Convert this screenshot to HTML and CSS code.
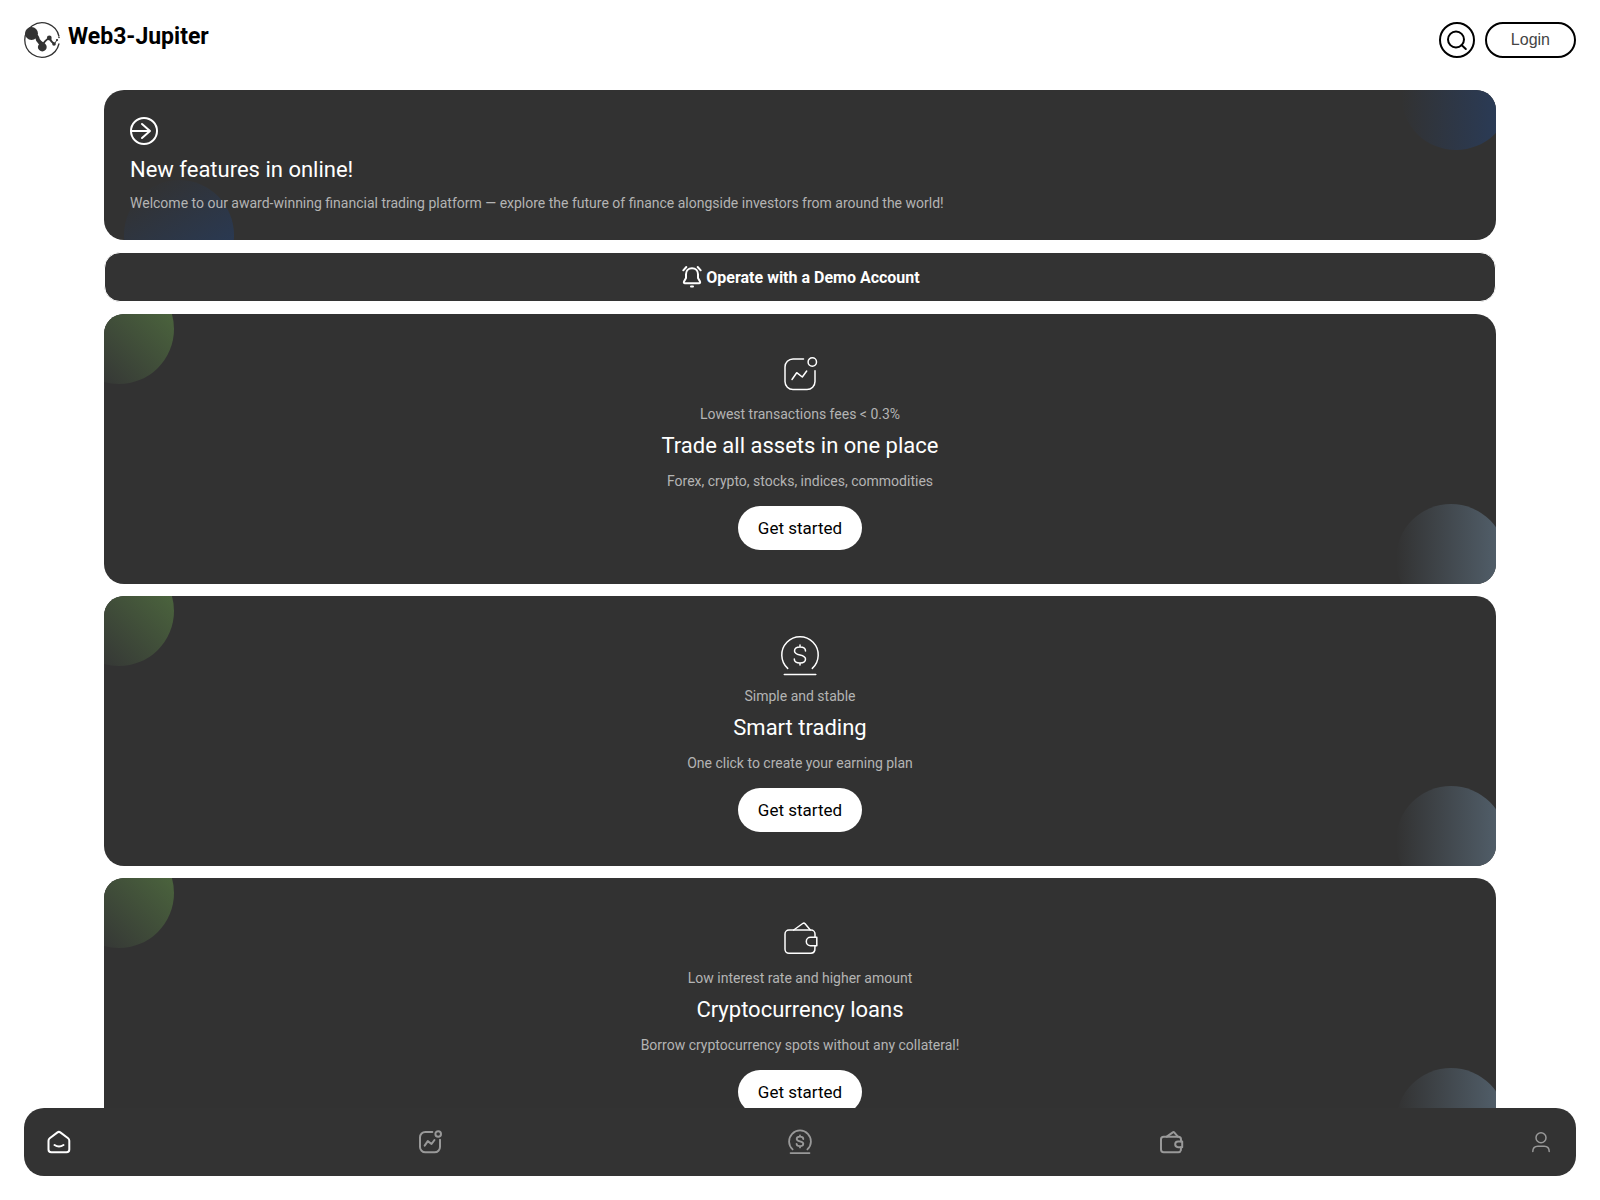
FILE: index.html
```html
<!DOCTYPE html>
<html lang="en">
<head>
<meta charset="utf-8">
<meta name="viewport" content="width=device-width, initial-scale=1">
<title>Web3-Jupiter</title>
<link rel="stylesheet" href="styles.css">
</head>
<body>
<svg class="sprite" aria-hidden="true">
  <defs>
    <g id="chart">
      <path d="M23.500 5H13a8 8 0 0 0-8 8v14.500a8 8 0 0 0 8 8h14a8 8 0 0 0 8-8V16.700"/>
      <circle cx="32.300" cy="8" r="4.200"/>
      <path d="M12 25.500l4.700-6.800 5.600 4.300 4.400-6"/>
    </g>
    <g id="dollar">
      <path d="M7.700 32.400a18.200 18.200 0 1 1 24.600 0M4.300 38.400h31.500"/>
      <path d="M20 9v2M20 27v2M25.500 15c0-2.500-2-4-5.500-4s-5.500 1.500-5.500 4c0 5.500 11 2.500 11 8 0 2.600-2.200 4-5.500 4s-5.700-1.400-5.700-4"/>
    </g>
    <g id="wallet">
      <path d="M35 19.300V16a4 4 0 0 0-4-4H9a4 4 0 0 0-4 4v15.300a4 4 0 0 0 4 4h22a4 4 0 0 0 3.800-3l.2-4.600"/>
      <path d="M36.800 19.300h-6.300a4.200 4.200 0 0 0 0 8.400h6.300zM13.700 12l9-6.500a1.800 1.800 0 0 1 2.400.3L30.300 12"/>
    </g>
  </defs>
</svg>

<header class="topbar">
  <a class="brand" href="#">
    <svg class="brand-logo" viewBox="0 0 36 36" aria-hidden="true">
      <path d="M34.900 14A17.300 17.300 0 1 0 34.900 22" stroke-width="1.300"/>
      <path d="M9 12q4.500 2 5 6 1.500 2.500 4 4" stroke-width="4"/>
      <path d="M18.300 24q1.700-5 7-8M25.300 16q2 4 5 6" stroke-width="2"/>
      <path d="M30.300 22l2.700-4" stroke-width="1"/>
      <g class="brand-dots">
        <circle cx="7.500" cy="11.500" r="6.500"/>
        <circle cx="18.300" cy="25" r="4.400"/>
        <circle cx="25.300" cy="16" r="2.400"/>
        <circle cx="30" cy="22" r="1.800"/>
        <circle cx="33" cy="18" r="1.100"/>
        <circle cx="35" cy="15.500" r=".8"/>
      </g>
    </svg>
    <span class="brand-name">Web3-Jupiter</span>
  </a>
  <div class="topbar-actions">
    <button class="search-button" type="button" aria-label="Search">
      <svg class="icon-search" viewBox="0 0 24 24" aria-hidden="true"><circle cx="11" cy="11.500" r="8"/><path d="M16.500 17l4.300 4"/></svg>
    </button>
    <button class="login-button" type="button">Login</button>
  </div>
</header>

<main class="content">
  <section class="card news">
    <svg class="icon-arrow" viewBox="0 0 28 28" aria-hidden="true"><circle cx="14" cy="14" r="13"/><path d="M1 14h19M12 7l8 7-8 7"/></svg>
    <h2 class="title">New features in online!</h2>
    <p class="text">Welcome to our award-winning financial trading platform — explore the future of finance alongside investors from around the world!</p>
  </section>

  <button class="demo-button" type="button">
    <svg class="icon-bell" viewBox="0 0 24 24" aria-hidden="true"><path d="M12 3.300c-3.700 0-6 2.700-6 6V13l-2 3.600c-.4.800 0 1.600.9 1.600h14.200c.9 0 1.300-.8.900-1.600L18 13V9.300c0-3.300-2.300-6-6-6zM11 21.500h2M3.300 5.300L6.300 2M20.700 5.300L17.700 2"/></svg>
    <span>Operate with a Demo Account</span>
  </button>

  <section class="card feature">
    <svg class="feature-icon" viewBox="0 0 40 40" aria-hidden="true"><use href="#chart"/></svg>
    <p class="text">Lowest transactions fees &lt; 0.3%</p>
    <h2 class="title">Trade all assets in one place</h2>
    <p class="text">Forex, crypto, stocks, indices, commodities</p>
    <button class="start-button" type="button">Get started</button>
  </section>

  <section class="card feature">
    <svg class="feature-icon" viewBox="0 0 40 40" aria-hidden="true"><use href="#dollar"/></svg>
    <p class="text">Simple and stable</p>
    <h2 class="title">Smart trading</h2>
    <p class="text">One click to create your earning plan</p>
    <button class="start-button" type="button">Get started</button>
  </section>

  <section class="card feature">
    <svg class="feature-icon" viewBox="0 0 40 40" aria-hidden="true"><use href="#wallet"/></svg>
    <p class="text">Low interest rate and higher amount</p>
    <h2 class="title">Cryptocurrency loans</h2>
    <p class="text">Borrow cryptocurrency spots without any collateral!</p>
    <button class="start-button" type="button">Get started</button>
  </section>
</main>

<nav class="tabbar" aria-label="Main">
  <a class="tab tab-active" href="#" aria-label="Home"><svg viewBox="0 0 24 24"><path d="M10.500 2.400L2.700 8.300A3 3 0 0 0 1.500 10.700v8.800a2.800 2.800 0 0 0 2.800 2.800h15.200a2.800 2.800 0 0 0 2.800-2.800v-8.800a3 3 0 0 0-1.200-2.400l-7.800-5.900a2.300 2.300 0 0 0-2.800 0zM7.500 15q4.500 3 9 0"/></svg></a>
  <a class="tab" href="#" aria-label="Trade"><svg class="tab-wide" viewBox="2 2 36 36"><use href="#chart"/></svg></a>
  <a class="tab" href="#" aria-label="Smart trading"><svg class="tab-wide" viewBox="0 0 40 40"><use href="#dollar"/></svg></a>
  <a class="tab" href="#" aria-label="Loans"><svg class="tab-wide" viewBox="2 2 36 36"><use href="#wallet"/></svg></a>
  <a class="tab" href="#" aria-label="Profile"><svg viewBox="0 0 24 24"><circle cx="12" cy="7.800" r="5"/><path d="M3.800 21.500c0-3.500 2-5.300 5-5.300h6.400c3 0 5 1.800 5 5.300"/></svg></a>
</nav>
</body>
</html>
```
FILE: styles.css
```css
* {
  box-sizing: border-box;
}

body {
  margin: 0;
  padding-bottom: 28px;
  background: #fff;
  color: #000;
  font-family: Roboto, "Liberation Sans", sans-serif;
}

button {
  font-family: inherit;
  cursor: pointer;
}

svg {
  display: block;
  flex: none;
  overflow: visible;
  fill: none;
  stroke: currentColor;
  stroke-linecap: round;
  stroke-linejoin: round;
}

.sprite {
  display: none;
}

.topbar {
  display: flex;
  justify-content: space-between;
  align-items: flex-start;
  padding: 22px 24px 32px;
}

.brand {
  display: flex;
  gap: 8px;
  color: #000;
  text-decoration: none;
}

.brand-logo {
  width: 36px;
  height: 36px;
  color: #333;
}

.brand-dots {
  fill: #333;
  stroke: none;
}

.brand-name {
  font-size: 23px;
  line-height: 30px;
  font-weight: 700;
}

.topbar-actions {
  display: flex;
  gap: 10px;
}

.search-button {
  display: flex;
  align-items: center;
  justify-content: center;
  width: 36px;
  height: 36px;
  padding: 0;
  border: 2px solid #000;
  border-radius: 50%;
  background: #fff;
  color: #000;
}

.icon-search {
  width: 24px;
  height: 24px;
  stroke-width: 2;
}

.login-button {
  height: 36px;
  padding: 0 24px;
  border: 2px solid #000;
  border-radius: 18px;
  background: #fff;
  color: #444;
  font-family: "Liberation Sans", Arial, sans-serif;
  font-size: 16px;
}

.content {
  display: flex;
  flex-direction: column;
  gap: 12px;
  margin: 0 104px;
}

.card {
  position: relative;
  isolation: isolate;
  overflow: hidden;
  border-radius: 20px;
  background: #323232;
  color: #fff;
}

.card::before,
.card::after {
  content: "";
  position: absolute;
  z-index: -1;
  width: 110px;
  height: 110px;
  border-radius: 50%;
}

.title {
  margin: 0;
  font-size: 22px;
  line-height: 34px;
  font-weight: 400;
}

.text {
  margin: 0;
  color: #b4b4b4;
  font-size: 14px;
  line-height: 20px;
}

.news {
  display: flex;
  flex-direction: column;
  padding: 27px 26px;
}

.news .title {
  margin: 8px 0 6px;
}

.news::before {
  top: -50px;
  right: -15px;
  background: linear-gradient(90deg, #323232, #293c5b);
}

.news::after {
  bottom: -50px;
  left: 20px;
  background: linear-gradient(150deg, #323232 10%, #263c60);
}

.icon-arrow {
  width: 28px;
  height: 28px;
  stroke-width: 2;
}

.demo-button {
  display: flex;
  align-items: center;
  justify-content: center;
  gap: 2px;
  height: 50px;
  border: 1px solid #fff;
  border-radius: 16px;
  background: #333;
  color: #fff;
  font-size: 16px;
  font-weight: 700;
}

.icon-bell {
  width: 24px;
  height: 24px;
  stroke-width: 2;
}

.feature {
  display: flex;
  flex-direction: column;
  align-items: center;
  padding: 40px 26px 34px;
  text-align: center;
}

.feature::before {
  top: -40px;
  left: -40px;
  background: linear-gradient(45deg, #363936 20%, #51703f);
}

.feature::after {
  right: -10px;
  bottom: -30px;
  background: linear-gradient(90deg, #323232, #53616d);
}

.feature-icon {
  width: 40px;
  height: 40px;
  margin-bottom: 10px;
  stroke-width: 1.5;
}

.feature .title {
  margin: 5px 0 8px;
}

.start-button {
  height: 44px;
  margin-top: 15px;
  padding: 0 20px;
  border: 0;
  border-radius: 22px;
  background: #fff;
  color: #000;
  font-size: 17px;
}

.tabbar {
  position: fixed;
  right: 24px;
  bottom: 24px;
  left: 24px;
  z-index: 1;
  display: flex;
  align-items: center;
  justify-content: space-between;
  height: 68px;
  padding: 0 23px;
  border-radius: 20px;
  background: #333;
}

.tab {
  color: #999;
}

.tab svg {
  width: 24px;
  height: 24px;
  stroke-width: 1.5;
}

.tab .tab-wide {
  stroke-width: 3;
}

.tab-active {
  color: #fff;
}

.tab-active svg {
  stroke-width: 2;
}
```
